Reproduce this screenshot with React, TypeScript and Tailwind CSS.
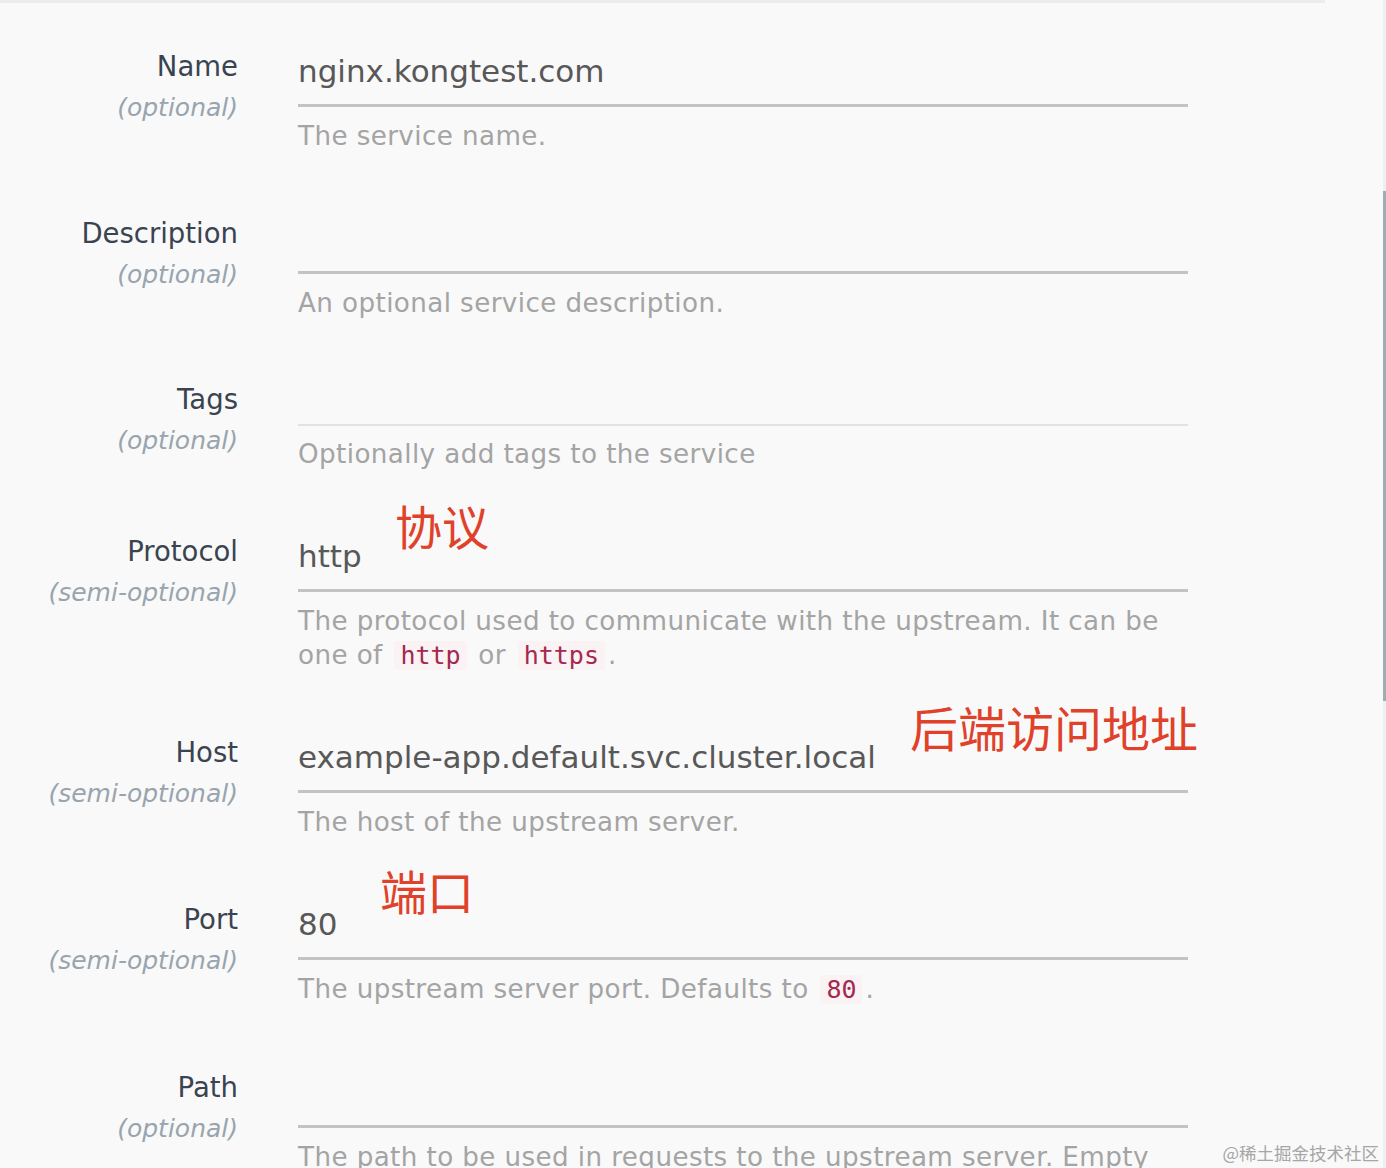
import React from "react";

const FONT = '"DejaVu Sans", "Noto Sans CJK SC", sans-serif';
const MONO = '"DejaVu Sans Mono", "Liberation Mono", monospace';
const CJK = '"Noto Sans CJK SC", sans-serif';

function Code({ children }: { children: React.ReactNode }) {
  return (
    <code
      className="mx-[3px] rounded-[3px] bg-[#fbf2f4] px-[6px] text-[25px] tracking-normal text-[#a3294f]"
      style={{ fontFamily: MONO }}
    >
      {children}
    </code>
  );
}

type RowProps = {
  label: string;
  hint: string;
  value?: string;
  light?: boolean;
  help: React.ReactNode;
  note?: React.ReactNode;
};

function Row({ label, hint, value, light, help, note }: RowProps) {
  return (
    <div className="flex">
      <div className="w-[238px] shrink-0 text-right">
        <div className="text-[27.5px] leading-[42px] text-[#3a4450]">{label}</div>
        <div className="text-[25px] italic leading-[42px] text-[#98a4ae]">{hint}</div>
      </div>
      <div className="ml-[60px] w-[890px]">
        <div
          className={
            light
              ? "relative h-[48px] border-b-2 border-[#e2e2e2]"
              : "relative h-[62px] border-b-[3px] border-[#c3c3c3] pb-[5px]"
          }
        >
          {value !== undefined && (
            <div className="text-[31px] leading-[52px] text-[#585858]">{value}</div>
          )}
          {note}
        </div>
        <div
          className={
            (light ? "mt-[11px] " : "mt-[12px] ") +
            "text-[26.2px] leading-[34px] tracking-[0.4px] text-[#a4a4a4]"
          }
        >
          {help}
        </div>
      </div>
    </div>
  );
}

function Note({ text, cls }: { text: string; cls: string }) {
  return (
    <div
      className={"absolute whitespace-nowrap leading-none text-[#e0412a] " + cls}
      style={{ fontFamily: CJK }}
    >
      {text}
    </div>
  );
}

export default function App() {
  return (
    <div
      className="relative h-[1168px] w-[1386px] overflow-hidden bg-[#f9f9f9]"
      style={{ fontFamily: FONT }}
    >
      <div className="h-[3px] w-[1325px] bg-[#ececec]" />
      <div className="flex flex-col gap-[58.6px] pt-[42px]">
        <Row
          label="Name"
          hint="(optional)"
          value="nginx.kongtest.com"
          help="The service name."
        />
        <Row
          label="Description"
          hint="(optional)"
          value=""
          help="An optional service description."
        />
        <Row
          label="Tags"
          hint="(optional)"
          light
          help="Optionally add tags to the service"
        />
        <Row
          label="Protocol"
          hint="(semi-optional)"
          value="http"
          note={<Note text="协议" cls="left-[97px] top-[-29px] text-[47px]" />}
          help={
            <>
              The protocol used to communicate with the upstream. It can be
              <br />
              one of <Code>http</Code> or <Code>https</Code>.
            </>
          }
        />
        <Row
          label="Host"
          hint="(semi-optional)"
          value="example-app.default.svc.cluster.local"
          note={<Note text="后端访问地址" cls="left-[612px] top-[-29px] text-[48px]" />}
          help="The host of the upstream server."
        />
        <Row
          label="Port"
          hint="(semi-optional)"
          value="80"
          note={<Note text="端口" cls="left-[82px] top-[-32px] text-[47px]" />}
          help={
            <>
              The upstream server port. Defaults to <Code>80</Code>.
            </>
          }
        />
        <Row
          label="Path"
          hint="(optional)"
          value=""
          help="The path to be used in requests to the upstream server. Empty"
        />
      </div>

      {/* scrollbar */}
      <div className="absolute right-0 top-0 h-full w-[3px] bg-[#efefef]">
        <div className="absolute left-0 top-[191px] h-[510px] w-[3px] bg-[#a1abb4]" />
      </div>

      {/* watermark */}
      <div
        className="absolute bottom-[7px] right-[7px] text-[17.5px] leading-none text-[#a6a6a6]"
        style={{ fontFamily: CJK }}
      >
        @稀土掘金技术社区
      </div>
    </div>
  );
}
